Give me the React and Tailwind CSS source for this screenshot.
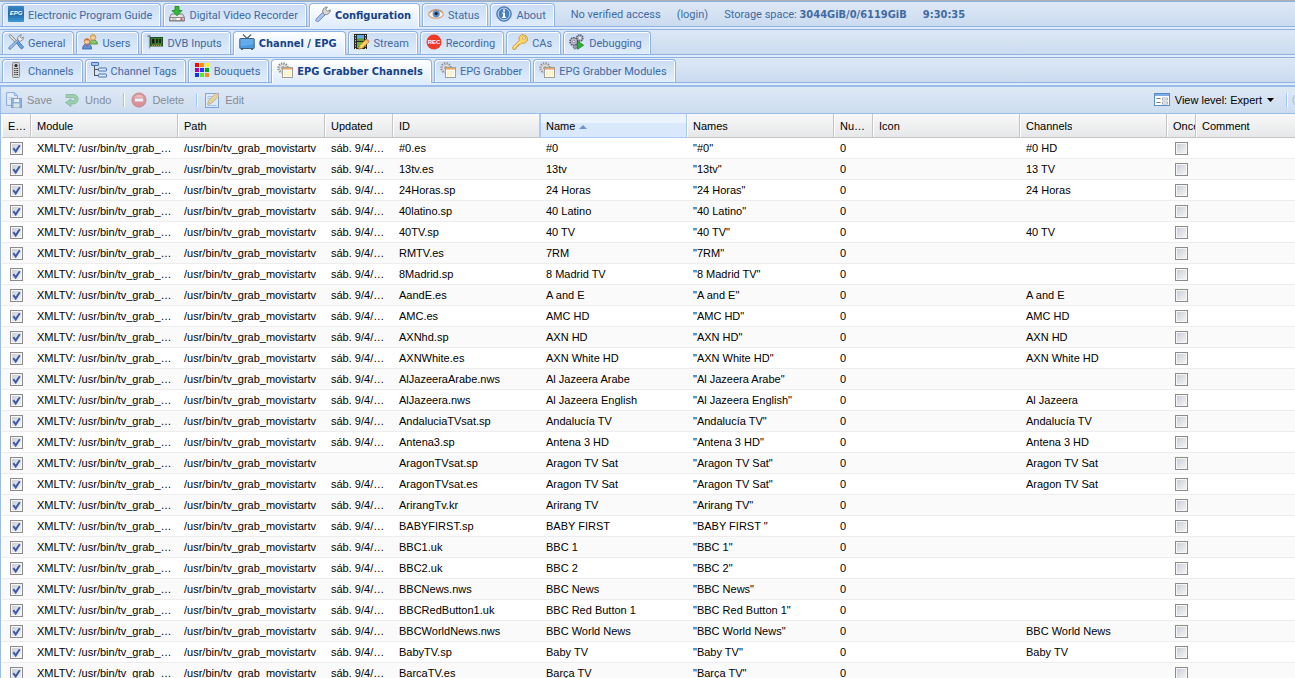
import React, { useState } from "react";

function Icon({ children, className = "" }) {
  return (
    <svg viewBox="0 0 16 16" className={"size-4 shrink-0 " + className} aria-hidden="true">
      {children}
    </svg>
  );
}

const EpgIcon = () => (
  <Icon>
    <defs>
      <linearGradient id="epgFill" x1="0" y1="0" x2="0" y2="1">
        <stop offset="0" stopColor="#3b87c8" />
        <stop offset=".5" stopColor="#2168a8" />
        <stop offset="1" stopColor="#3f9ad8" />
      </linearGradient>
    </defs>
    <rect x="0" y="0" width="16" height="16" rx="1" fill="url(#epgFill)" />
    <text x="8" y="9" textAnchor="middle" fontSize="6" fontWeight="700" fontStyle="italic" fontFamily="Liberation Sans, sans-serif" fill="#fff">EPG</text>
  </Icon>
);

const DvrIcon = () => (
  <Icon>
    <path d="M2.500 8h11l2 3.500v3.500h-15v-3.500z" fill="#e4e4e4" stroke="#7d7d7d" />
    <path d="M1 11.500h14v3H1z" fill="#fafafa" stroke="#8a8a8a" />
    <path d="M2.500 13h5" stroke="#999" />
    <rect x="11.500" y="12.300" width="2" height="1.600" fill="#e02020" />
    <path d="M6 .5h4v4h3L8 9.800 3 4.500h3z" fill="#35b83a" stroke="#15871b" strokeWidth=".8" />
  </Icon>
);

const WrenchIcon = () => (
  <Icon>
    <path d="M1 13.200 7.500 6.500l2.500 2.500-6.300 6.300c-1.600 1-3.700-.6-2.700-2.100z" fill="#a9c5ef" stroke="#6485c0" strokeWidth=".9" />
    <path d="M8 7.200C7 4 9 .8 12.400 1L10.700 3.400l1.900 1.900L15.200 3.800C15.600 7 12.600 9 9.600 8.600z" fill="#d8d8d8" stroke="#777" strokeWidth=".9" />
  </Icon>
);

const EyeIcon = () => (
  <Icon>
    <path d="M.4 8.500C2.500 3.500 13 2.500 15.600 8.500 13 13.500 3 13.500.4 8.500z" fill="#fdf5ec" stroke="#dba77c" strokeWidth="1.100" />
    <circle cx="8.200" cy="7.800" r="3.600" fill="#5b8cc9" />
    <circle cx="8.200" cy="7.600" r="1.600" fill="#17233c" />
    <path d="M1 6.800C4 2.800 12 2.600 15 6.500" fill="none" stroke="#c48a60" strokeWidth="1" />
  </Icon>
);

const InfoIcon = () => (
  <Icon>
    <circle cx="8" cy="8" r="7.300" fill="#5286be" stroke="#3b6ca6" strokeWidth=".8" />
    <circle cx="8" cy="8" r="5.900" fill="#4a80ba" stroke="#cfe0f2" strokeWidth=".9" />
    <path d="M7.100 3.600h1.900v1.800H7.100zM6.200 6.600h2.800v4.200h1v1.200H6.100v-1.200h1V7.800h-.9z" fill="#fff" />
  </Icon>
);

const ToolsIcon = () => (
  <Icon>
    <path d="M1.500 1 3 .8l6 6.600-1.300 1.200L1.400 2.600z" fill="#e4e4e4" stroke="#777" strokeWidth=".8" />
    <path d="m8.600 9 1.800-1.700 4.600 5c.9 1.600-1 3.400-2.400 2z" fill="#6ea2e6" stroke="#3968b4" strokeWidth=".8" />
    <path d="m1 13.300 9-8.400 1.300 1.400-8.600 8.800c-1.300.9-2.500-.5-1.700-1.800z" fill="#9cc0ee" stroke="#4d74b0" strokeWidth=".8" />
    <path d="M9.800 5.700c-.6-2.800 1.200-5 3.700-4.900L12 2.800l1.300 1.400 2.100-1c.3 2.700-2 4.400-4.300 4z" fill="#eee" stroke="#777" strokeWidth=".8" />
  </Icon>
);

const UsersIcon = () => (
  <Icon>
    <path d="M7.500 10c0-3 1.600-4 3.800-4s4.200 1.200 4.200 4z" fill="#8bc56c" stroke="#3f8a2b" strokeWidth=".8" />
    <circle cx="11" cy="3.400" r="2.800" fill="#f5cf9c" stroke="#b88a3a" strokeWidth=".8" />
    <path d="M8.300 3C8.600.2 13.400.2 13.900 3 12 2.400 10 1.900 8.300 3z" fill="#d9a94a" />
    <path d="M.6 15c0-3.600 1.800-5 4.400-5s4.600 1.400 4.600 5z" fill="#5e95dd" stroke="#2e61ac" strokeWidth=".8" />
    <circle cx="5" cy="7.400" r="2.800" fill="#f4caa0" stroke="#bb7b3f" strokeWidth=".8" />
    <path d="M2.300 7C2.700 4 7.400 4 7.700 7 6.400 6.200 4 5.800 2.300 7z" fill="#d96a2e" />
    <path d="M4.200 10.400 5 14l.8-3.600z" fill="#e33" />
  </Icon>
);

const CardIcon = () => (
  <Icon>
    <path d="M2.500 1.500v13" stroke="#8f979c" strokeWidth="1.400" />
    <path d="M.5 2h3" stroke="#5a5a5a" />
    <rect x="3.500" y="3.500" width="12" height="8.500" fill="#3e7a34" stroke="#1e4f24" />
    <rect x="5" y="5" width="2.500" height="4.500" fill="#151e16" />
    <rect x="9" y="5" width="2" height="4" fill="#1b2a1c" />
    <rect x="12" y="5" width="2" height="4" fill="#1b2a1c" />
    <path d="M5 11.500h9" stroke="#b4a24a" strokeDasharray="1 1" />
  </Icon>
);

const TvIcon = () => (
  <Icon>
    <path d="M4 .5 8 4.500 12.200.5" fill="none" stroke="#555" strokeWidth="1.100" />
    <rect x=".8" y="4.500" width="14.400" height="10" rx=".6" fill="#4a98de" stroke="#3d5f84" />
    <path d="M1.500 5h13v5L1.500 12.500z" fill="#7dbcf2" opacity=".55" />
    <path d="M2 15.300h2M12 15.300h2" stroke="#444" />
  </Icon>
);

const StreamIcon = () => (
  <Icon>
    <rect x="0" y="0" width="13" height="15" fill="#262626" />
    <rect x="3" y="1" width="7" height="6" fill="#5eaae2" />
    <rect x="3" y="4.500" width="7" height="2.500" fill="#5f9d33" />
    <rect x="3" y="8" width="7" height="6" fill="#6bb441" />
    <path d="M1.500 1v14M11.500 1v14" stroke="#ddd" strokeDasharray="1.200 1.400" />
    <path d="m4.500 15.200 1-3.700 6.600-6.100 2.800 2.700-6.700 6.200z" fill="#f8cf62" stroke="#b5761d" strokeWidth=".8" />
    <path d="m12.100 5.400 1-1 2.700 2.600-.9 1.100z" fill="#ec8f80" />
  </Icon>
);

const RecIcon = () => (
  <Icon>
    <circle cx="8" cy="8" r="7.500" fill="#ee3a27" />
    <text x="8" y="10.200" textAnchor="middle" fontSize="6" fontWeight="700" fontFamily="Liberation Sans, sans-serif" fill="#fff">REC</text>
  </Icon>
);

const KeyIcon = () => (
  <Icon>
    <path d="M.8 12.800 7.300 6.600C6.200 3 8.400.7 11 .7c2.500 0 4.400 2 4.400 4.300 0 3-2.800 5-5.800 4.100L8.200 10.500l-1.800.2-.2 1.800-1.700.3-.3 1.800-1.400.8H1z" fill="#fbd667" stroke="#c8932a" strokeWidth=".9" />
    <circle cx="12" cy="4" r="1.400" fill="#fff" stroke="#c8932a" strokeWidth=".7" />
    <path d="m2 13.400 6-5.800" stroke="#fff2b8" strokeWidth=".9" />
  </Icon>
);

const DebugIcon = () => (
  <Icon>
    <circle cx="10.800" cy="4" r="3.100" fill="#b8b8cb" stroke="#555568" strokeWidth="1.500" strokeDasharray="1.400 .7" />
    <circle cx="4.800" cy="7.500" r="3.800" fill="#c1c1d2" stroke="#555568" strokeWidth="1.600" strokeDasharray="1.600 .8" />
    <circle cx="4.800" cy="7.500" r="1.400" fill="#eef" stroke="#667" strokeWidth=".7" />
    <circle cx="10.800" cy="4" r="1.100" fill="#eef" />
    <circle cx="6.200" cy="13" r="2" fill="#9a9aaf" stroke="#555568" strokeDasharray="1 .6" />
    <path d="m8.600 7.200 6 4-6 4.100z" fill="#2fb632" stroke="#137a17" strokeWidth=".8" />
  </Icon>
);

const RemoteIcon = () => (
  <Icon>
    <rect x="4.500" y=".5" width="7" height="15" rx="1" fill="#cfcfcf" stroke="#8a8a8a" />
    <circle cx="8" cy="3.500" r="1.500" fill="#222" />
    <path d="M6.200 6.500h3.800M6.200 8.500h3.800M6.200 10.500h3.800M6.200 12.500h3.800" stroke="#333" strokeDasharray="1 .4" />
  </Icon>
);

const TreeIcon = () => (
  <Icon>
    <path d="M3.500 3v11M3.500 7.500H8M3.500 13.500H8" stroke="#555" fill="none" />
    <rect x=".5" y=".5" width="7" height="3" rx=".5" fill="#a9c4f2" stroke="#4470b8" />
    <rect x="7.500" y="6" width="8" height="3" rx=".5" fill="#dfeafb" stroke="#4470b8" />
    <rect x="7.500" y="12" width="8" height="3" rx=".5" fill="#dfeafb" stroke="#4470b8" />
  </Icon>
);

const BouquetIcon = () => (
  <Icon>
    <rect x="1" y="1" width="4" height="4" fill="#f00808" />
    <rect x="6" y="1" width="4" height="4" fill="#ff8a00" />
    <rect x="11" y="1" width="4" height="4" fill="#ffee1c" />
    <rect x="1" y="6" width="4" height="4" fill="#b000a8" />
    <rect x="6" y="6" width="4" height="4" fill="#2130ff" />
    <rect x="11" y="6" width="4" height="4" fill="#00a410" />
    <rect x="1" y="11" width="4" height="4" fill="#1a30ff" />
    <rect x="6" y="11" width="4" height="4" fill="#55ef12" />
    <rect x="11" y="11" width="4" height="4" fill="#ff8b1d" />
  </Icon>
);

const GrabberIcon = () => (
  <Icon>
    <circle cx="6" cy="6" r="4.800" fill="#ececec" stroke="#8a8a8a" strokeWidth="1.900" strokeDasharray="1.300 1.200" />
    <circle cx="6" cy="6" r="3.600" fill="#ededed" stroke="#a0a0a0" strokeWidth=".7" />
    <circle cx="6" cy="6" r="1.600" fill="#fff" stroke="#8a8a8a" strokeWidth=".7" />
    <rect x="5.500" y="5.500" width="10" height="10" fill="#fff" stroke="#a39f98" />
    <rect x="6" y="6" width="9" height="1.600" fill="#f3a55c" />
    <rect x="7" y="9" width="7" height="5.500" fill="#fbf0c4" />
    <path d="M9.500 8.500v6M12.500 8.500v6" stroke="#fff" strokeWidth=".7" />
  </Icon>
);

const SaveIcon = () => (
  <Icon>
    <path d="M.6.6h7.800l3 3v9.800H.6z" fill="#eef5fe" stroke="#3a74c2" />
    <path d="M8.400.6v3h3" fill="none" stroke="#3a74c2" />
    <path d="M2.500 5.500h5M2.500 7.500h3" stroke="#9cbce4" />
    <rect x="5.600" y="6.600" width="9.800" height="8.800" fill="#4f84cf" stroke="#2a57a0" />
    <rect x="8" y="7" width="5" height="3" fill="#fff" />
    <rect x="7.500" y="11.500" width="6" height="4" fill="#dcebd0" />
  </Icon>
);

const UndoIcon = () => (
  <Icon>
    <path d="M2 2.500h7.500a4.700 4.700 0 0 1 0 9.400H7v2.600L1.500 10.600 7 6.800v2h2.300a1.600 1.600 0 0 0 0-3.200H2z" fill="#5fbf6c" stroke="#2f8a45" strokeWidth=".8" />
  </Icon>
);

const DeleteIcon = () => (
  <Icon>
    <circle cx="8" cy="8" r="7" fill="#e2463c" stroke="#b52d28" />
    <path d="M3.400 5.500C5 1.800 11 1.800 12.600 5.500z" fill="#f39a8e" />
    <rect x="3.800" y="6.500" width="8.400" height="3" fill="#fff" />
  </Icon>
);

const EditIcon = () => (
  <Icon>
    <rect x="1.500" y="1.500" width="13" height="14" fill="#e4f0fe" stroke="#2c6bbd" />
    <path d="M3.500 4.500h5M3.500 6.500h4M3.500 13.500h9" stroke="#7fa6dc" />
    <path d="m3.600 12.500 1-3.800L11.800 1.300l2.800 2.700-7.200 7.400z" fill="#f8c840" stroke="#a8741a" strokeWidth=".9" />
    <path d="m11.800 1.300 1-.9 2.700 2.600-.9 1z" fill="#e58a78" />
  </Icon>
);

const ViewIcon = () => (
  <Icon>
    <rect x=".5" y="1.500" width="15" height="12" fill="#fff" stroke="#5a8ccc" />
    <rect x="1" y="2" width="14" height="2" fill="#7fabe2" />
    <path d="M2.500 6.500h4M2.500 10.500h4" stroke="#6c7680" />
    <rect x="8.500" y="6" width="5" height="2" fill="#fff" stroke="#9aa6b4" strokeWidth=".8" />
    <rect x="8.500" y="10" width="5" height="2" fill="#fff" stroke="#9aa6b4" strokeWidth=".8" />
  </Icon>
);

const HelpIcon = () => (
  <Icon>
    <circle cx="8" cy="8" r="7" fill="#dfe9f7" stroke="#7d9cc4" />
    <circle cx="8" cy="8" r="4.500" fill="#6f9bd4" />
  </Icon>
);

const TAB_ROWS = [
  [
    { label: "Electronic Program Guide", icon: EpgIcon },
    { label: "Digital Video Recorder", icon: DvrIcon },
    { label: "Configuration", icon: WrenchIcon, active: true },
    { label: "Status", icon: EyeIcon },
    { label: "About", icon: InfoIcon },
  ],
  [
    { label: "General", icon: ToolsIcon },
    { label: "Users", icon: UsersIcon },
    { label: "DVB Inputs", icon: CardIcon },
    { label: "Channel / EPG", icon: TvIcon, active: true },
    { label: "Stream", icon: StreamIcon },
    { label: "Recording", icon: RecIcon },
    { label: "CAs", icon: KeyIcon },
    { label: "Debugging", icon: DebugIcon },
  ],
  [
    { label: "Channels", icon: RemoteIcon },
    { label: "Channel Tags", icon: TreeIcon },
    { label: "Bouquets", icon: BouquetIcon },
    { label: "EPG Grabber Channels", icon: GrabberIcon, active: true },
    { label: "EPG Grabber", icon: GrabberIcon },
    { label: "EPG Grabber Modules", icon: GrabberIcon },
  ],
];

function Tab({ tab }) {
  const Glyph = tab.icon;
  const look = tab.active
    ? "h-6 -mb-px pb-[3px] bg-linear-to-b from-white to-[#deecfd] font-['DejaVu_Sans_Condensed','DejaVu_Sans',sans-serif] font-bold text-[#15428b]"
    : "h-[23px] pb-0.5 bg-linear-to-b from-[#ccddf3] to-[#deecfd] text-[#416aa3]";
  return (
    <button
      type="button"
      role="tab"
      aria-selected={!!tab.active}
      className={"flex shrink-0 items-center gap-1 rounded-t border border-b-0 border-[#8db2e3] pr-2 pl-[5px] whitespace-nowrap shadow-[inset_1px_1px_0_#fff,inset_-1px_0_0_#fff] " + look}
    >
      <Glyph />
      <span className="pt-0.5">{tab.label}</span>
    </button>
  );
}

function TabStrip({ tabs, label, children }) {
  return (
    <div className="shrink-0 bg-[#deecfd] pb-0.5">
      <div className="flex h-[26px] border-y border-[#8db2e3] bg-linear-to-b from-[#dde8f5] to-[#cbdbef] pt-px pl-0.5">
        <div role="tablist" aria-label={label} className="flex gap-0.5">
          {tabs.map((t) => (
            <Tab key={t.label} tab={t} />
          ))}
        </div>
        {children}
      </div>
    </div>
  );
}

function ToolButton({ icon: Glyph, label }) {
  return (
    <button type="button" disabled className="flex items-center gap-[5px] pr-2 pl-1 opacity-50">
      <Glyph />
      <span className="text-[#333]">{label}</span>
    </button>
  );
}

const Separator = () => (
  <span className="mr-0.5 ml-1 h-3.5 w-0.5 shrink-0 border-l border-[#98c8ff] bg-white" />
);

const COLUMNS = [
  { title: "Enabled", width: "w-[29px]" },
  { title: "Module", width: "w-[147px]" },
  { title: "Path", width: "w-[147px]" },
  { title: "Updated", width: "w-[68px]" },
  { title: "ID", width: "w-[147px]" },
  { title: "Name", width: "w-[147px]", sorted: true },
  { title: "Names", width: "w-[147px]" },
  { title: "Number", width: "w-[39px]" },
  { title: "Icon", width: "w-[147px]" },
  { title: "Channels", width: "w-[147px]" },
  { title: "Once", width: "w-[29px]", clip: true },
  { title: "Comment", width: "" },
];

const ROWS = [
  { id: "#0.es", name: "#0", channel: "#0 HD" },
  { id: "13tv.es", name: "13tv", channel: "13 TV" },
  { id: "24Horas.sp", name: "24 Horas", channel: "24 Horas" },
  { id: "40latino.sp", name: "40 Latino" },
  { id: "40TV.sp", name: "40 TV", channel: "40 TV" },
  { id: "RMTV.es", name: "7RM" },
  { id: "8Madrid.sp", name: "8 Madrid TV" },
  { id: "AandE.es", name: "A and E", channel: "A and E" },
  { id: "AMC.es", name: "AMC HD", channel: "AMC HD" },
  { id: "AXNhd.sp", name: "AXN HD", channel: "AXN HD" },
  { id: "AXNWhite.es", name: "AXN White HD", channel: "AXN White HD" },
  { id: "AlJazeeraArabe.nws", name: "Al Jazeera Arabe" },
  { id: "AlJazeera.nws", name: "Al Jazeera English", channel: "Al Jazeera" },
  { id: "AndaluciaTVsat.sp", name: "Andalucía TV", channel: "Andalucía TV" },
  { id: "Antena3.sp", name: "Antena 3 HD", channel: "Antena 3 HD" },
  { id: "AragonTVsat.sp", name: "Aragon TV Sat", channel: "Aragon TV Sat", stale: true },
  { id: "AragonTVsat.es", name: "Aragon TV Sat", channel: "Aragon TV Sat" },
  { id: "ArirangTv.kr", name: "Arirang TV" },
  { id: "BABYFIRST.sp", name: "BABY FIRST", names: '"BABY FIRST "' },
  { id: "BBC1.uk", name: "BBC 1" },
  { id: "BBC2.uk", name: "BBC 2" },
  { id: "BBCNews.nws", name: "BBC News" },
  { id: "BBCRedButton1.uk", name: "BBC Red Button 1" },
  { id: "BBCWorldNews.nws", name: "BBC World News", channel: "BBC World News" },
  { id: "BabyTV.sp", name: "Baby TV", channel: "Baby TV" },
  { id: "BarcaTV.es", name: "Barça TV" },
];

function GridCheck({ label, initial }) {
  const [on, setOn] = useState(initial);
  return (
    <label className="grid size-[13px] place-items-center">
      <input
        type="checkbox"
        aria-label={label}
        checked={on}
        onChange={(e) => setOn(e.target.checked)}
        className="col-start-1 row-start-1 size-[13px] appearance-none border border-[#8b8b8b] bg-linear-to-br from-[#c6cbd4] to-[#f8f8f8] shadow-[inset_0_0_0_1px_#f6f6f6]"
      />
      {on && (
        <svg viewBox="0 0 13 13" className="pointer-events-none col-start-1 row-start-1 size-[13px]" aria-hidden="true">
          <path d="M3.300 6.200 5.700 9.400 9.800 3.300" fill="none" stroke="#3f5aa6" strokeWidth="2" />
        </svg>
      )}
    </label>
  );
}

function HeaderCell({ col }) {
  const look = col.sorted
    ? "border-[#aaccf6] bg-linear-to-b from-[#ebf3fd] from-40% to-[#d9e8fb] to-40% shadow-[inset_1px_0_0_#aaccf6]"
    : "border-[#c5c5c5] bg-linear-to-b from-[#f9f9f9] to-[#e6e7e9] shadow-[inset_1px_0_0_#fff]";
  return (
    <th scope="col" aria-sort={col.sorted ? "ascending" : undefined} className={"h-6 border-r border-b p-0 text-left font-normal last:border-r-0 " + look}>
      <div className={"flex items-center gap-1 overflow-hidden pt-0.5 pl-1.5 " + (col.clip ? "" : "pr-1")}>
        <span className={col.clip ? "whitespace-nowrap" : "truncate"}>{col.title}</span>
        {col.sorted && (
          <svg viewBox="0 0 8 4" className="h-1 w-2 shrink-0" aria-hidden="true">
            <path d="M0 4 4 0l4 4z" fill="#6d94cc" />
          </svg>
        )}
      </div>
    </th>
  );
}

const Cell = ({ children }) => <td className="truncate px-1.5 py-0">{children}</td>;

function GrabberGrid() {
  return (
    <table className="w-full table-fixed border-separate border-spacing-0">
      <colgroup>
        {COLUMNS.map((c) => (
          <col key={c.title} className={c.width} />
        ))}
      </colgroup>
      <thead>
        <tr>
          {COLUMNS.map((c) => (
            <HeaderCell key={c.title} col={c} />
          ))}
        </tr>
      </thead>
      <tbody>
        {ROWS.map((r) => (
          <tr key={r.id} className="h-[21px] even:bg-[#fafafa] [&>td]:border-b [&>td]:border-[#ededed]">
            <td className="py-0 pl-2">
              <GridCheck label={"Enabled: " + r.id} initial={true} />
            </td>
            <Cell>XMLTV: /usr/bin/tv_grab_movistartv</Cell>
            <Cell>/usr/bin/tv_grab_movistartv</Cell>
            <Cell>{r.stale ? "" : "sáb. 9/4/2016"}</Cell>
            <Cell>{r.id}</Cell>
            <Cell>{r.name}</Cell>
            <Cell>{r.names || `"${r.name}"`}</Cell>
            <Cell>0</Cell>
            <Cell />
            <Cell>{r.channel}</Cell>
            <td className="py-0 pl-2">
              <GridCheck label={"Once per auto: " + r.id} initial={false} />
            </td>
            <Cell />
          </tr>
        ))}
      </tbody>
    </table>
  );
}

export default function App() {
  return (
    <div className="flex h-screen flex-col overflow-hidden border-t border-[#b0b0b0] bg-white font-['Liberation_Sans',Arial,sans-serif] text-[11px] leading-[13px] text-black">
      <nav className="shrink-0 font-[Roboto,Tahoma,sans-serif]">
        <TabStrip tabs={TAB_ROWS[0]} label="Sections">
          <div className="flex items-center gap-4 pl-4 whitespace-nowrap text-[#416aa3]">
            <span>No verified access</span>
            <a href="#login">(login)</a>
            <span>
              Storage space:{" "}
              <b className="font-['DejaVu_Sans_Condensed','DejaVu_Sans',sans-serif]">3044GiB/0/6119GiB</b>
            </span>
            <b className="font-['DejaVu_Sans_Condensed','DejaVu_Sans',sans-serif]">9:30:35</b>
          </div>
        </TabStrip>
        <TabStrip tabs={TAB_ROWS[1]} label="Configuration" />
        <TabStrip tabs={TAB_ROWS[2]} label="Channel and EPG" />
      </nav>
      <main className="flex min-h-0 flex-1 flex-col border-l border-[#99bce8]">
        <div className="flex h-[29px] shrink-0 items-center border-t-2 border-b border-[#99bce8] bg-linear-to-b from-[#dfe9f5] to-[#cddcf0] pl-px">
          <ToolButton icon={SaveIcon} label="Save" />
          <ToolButton icon={UndoIcon} label="Undo" />
          <Separator />
          <ToolButton icon={DeleteIcon} label="Delete" />
          <Separator />
          <ToolButton icon={EditIcon} label="Edit" />
          <div className="-mr-[15px] ml-auto flex shrink-0 items-center">
            <button type="button" className="flex items-center gap-[5px] pr-2 pl-1 whitespace-nowrap">
              <ViewIcon />
              <span>View level: Expert</span>
              <svg viewBox="0 0 7 4" className="h-1 w-[7px]" aria-hidden="true">
                <path d="M0 0h7L3.500 4z" fill="#000" />
              </svg>
            </button>
            <Separator />
            <button type="button" aria-label="Help" className="px-0.5 opacity-60">
              <HelpIcon />
            </button>
          </div>
        </div>
        <div className="min-h-0 flex-1 overflow-hidden pl-px">
          <GrabberGrid />
        </div>
      </main>
    </div>
  );
}
